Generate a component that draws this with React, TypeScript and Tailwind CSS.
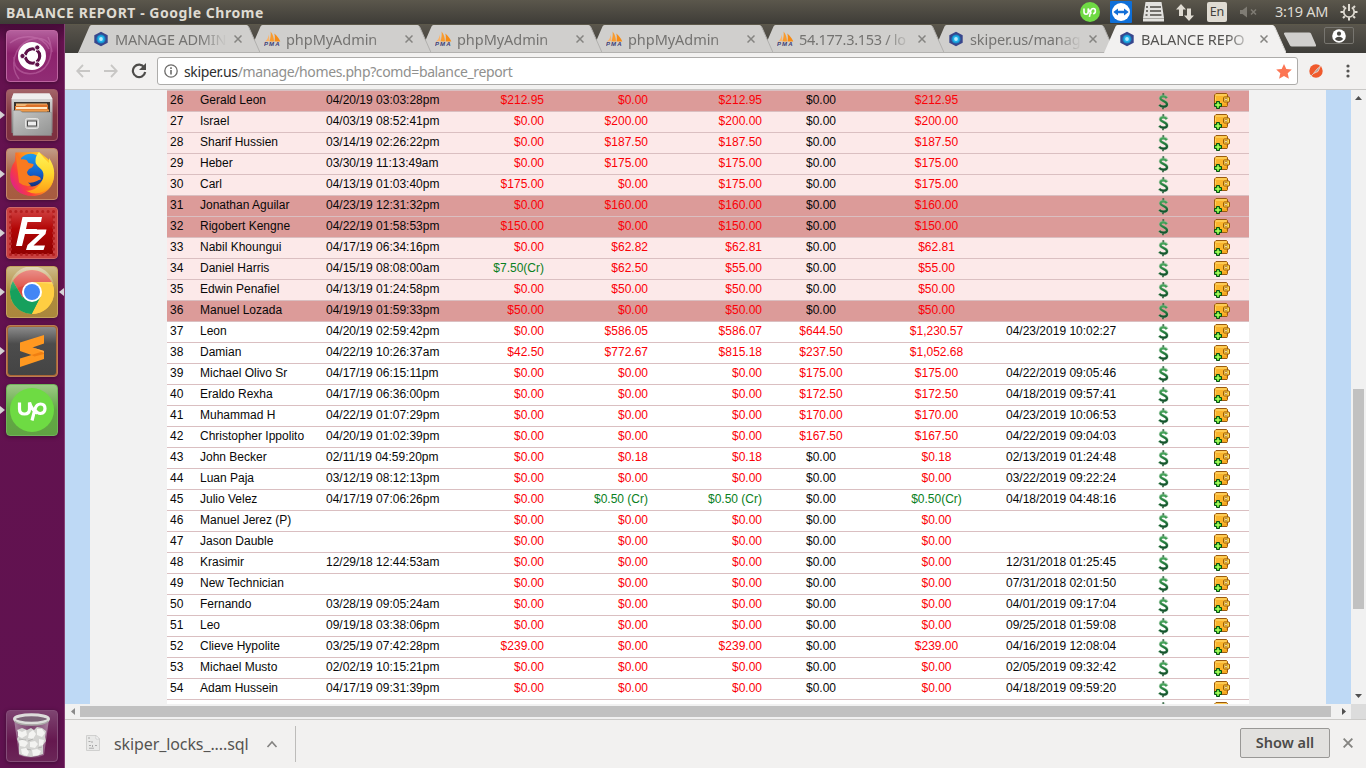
import React from 'react';

type Row = [number, string, string, string, string, string, string, string, string];

const rows: Row[] = [
  [26, 'Gerald Leon', '04/20/19 03:03:28pm', '$212.95', '$0.00', '$212.95', '$0.00', '$212.95', ''],
  [27, 'Israel', '04/03/19 08:52:41pm', '$0.00', '$200.00', '$200.00', '$0.00', '$200.00', ''],
  [28, 'Sharif Hussien', '03/14/19 02:26:22pm', '$0.00', '$187.50', '$187.50', '$0.00', '$187.50', ''],
  [29, 'Heber', '03/30/19 11:13:49am', '$0.00', '$175.00', '$175.00', '$0.00', '$175.00', ''],
  [30, 'Carl', '04/13/19 01:03:40pm', '$175.00', '$0.00', '$175.00', '$0.00', '$175.00', ''],
  [31, 'Jonathan Aguilar', '04/23/19 12:31:32pm', '$0.00', '$160.00', '$160.00', '$0.00', '$160.00', ''],
  [32, 'Rigobert Kengne', '04/22/19 01:58:53pm', '$150.00', '$0.00', '$150.00', '$0.00', '$150.00', ''],
  [33, 'Nabil Khoungui', '04/17/19 06:34:16pm', '$0.00', '$62.82', '$62.81', '$0.00', '$62.81', ''],
  [34, 'Daniel Harris', '04/15/19 08:08:00am', '$7.50(Cr)', '$62.50', '$55.00', '$0.00', '$55.00', ''],
  [35, 'Edwin Penafiel', '04/13/19 01:24:58pm', '$0.00', '$50.00', '$50.00', '$0.00', '$50.00', ''],
  [36, 'Manuel Lozada', '04/19/19 01:59:33pm', '$50.00', '$0.00', '$50.00', '$0.00', '$50.00', ''],
  [37, 'Leon', '04/20/19 02:59:42pm', '$0.00', '$586.05', '$586.07', '$644.50', '$1,230.57', '04/23/2019 10:02:27'],
  [38, 'Damian', '04/22/19 10:26:37am', '$42.50', '$772.67', '$815.18', '$237.50', '$1,052.68', ''],
  [39, 'Michael Olivo Sr', '04/17/19 06:15:11pm', '$0.00', '$0.00', '$0.00', '$175.00', '$175.00', '04/22/2019 09:05:46'],
  [40, 'Eraldo Rexha', '04/17/19 06:36:00pm', '$0.00', '$0.00', '$0.00', '$172.50', '$172.50', '04/18/2019 09:57:41'],
  [41, 'Muhammad H', '04/22/19 01:07:29pm', '$0.00', '$0.00', '$0.00', '$170.00', '$170.00', '04/23/2019 10:06:53'],
  [42, 'Christopher Ippolito', '04/20/19 01:02:39pm', '$0.00', '$0.00', '$0.00', '$167.50', '$167.50', '04/22/2019 09:04:03'],
  [43, 'John Becker', '02/11/19 04:59:20pm', '$0.00', '$0.18', '$0.18', '$0.00', '$0.18', '02/13/2019 01:24:48'],
  [44, 'Luan Paja', '03/12/19 08:12:13pm', '$0.00', '$0.00', '$0.00', '$0.00', '$0.00', '03/22/2019 09:22:24'],
  [45, 'Julio Velez', '04/17/19 07:06:26pm', '$0.00', '$0.50 (Cr)', '$0.50 (Cr)', '$0.00', '$0.50(Cr)', '04/18/2019 04:48:16'],
  [46, 'Manuel Jerez (P)', '', '$0.00', '$0.00', '$0.00', '$0.00', '$0.00', ''],
  [47, 'Jason Dauble', '', '$0.00', '$0.00', '$0.00', '$0.00', '$0.00', ''],
  [48, 'Krasimir', '12/29/18 12:44:53am', '$0.00', '$0.00', '$0.00', '$0.00', '$0.00', '12/31/2018 01:25:45'],
  [49, 'New Technician', '', '$0.00', '$0.00', '$0.00', '$0.00', '$0.00', '07/31/2018 02:01:50'],
  [50, 'Fernando', '03/28/19 09:05:24am', '$0.00', '$0.00', '$0.00', '$0.00', '$0.00', '04/01/2019 09:17:04'],
  [51, 'Leo', '09/19/18 03:38:06pm', '$0.00', '$0.00', '$0.00', '$0.00', '$0.00', '09/25/2018 01:59:08'],
  [52, 'Clieve Hypolite', '03/25/19 07:42:28pm', '$239.00', '$0.00', '$239.00', '$0.00', '$239.00', '04/16/2019 12:08:04'],
  [53, 'Michael Musto', '02/02/19 10:15:21pm', '$0.00', '$0.00', '$0.00', '$0.00', '$0.00', '02/05/2019 09:32:42'],
  [54, 'Adam Hussein', '04/17/19 09:31:39pm', '$0.00', '$0.00', '$0.00', '$0.00', '$0.00', '04/18/2019 09:59:20'],
];

const darkRows = [26, 31, 32, 36];

function rowTone(n: number) {
  if (darkRows.includes(n)) return 'bg-[#dc9b99]';
  return n < 37 ? 'bg-[#fce9e9]' : 'bg-white';
}

function amountTone(v: string) {
  return v.includes('Cr') ? 'text-[#098022]' : 'text-[#fb0007]';
}

function DollarIcon() {
  return (
    <svg width="12" height="17" viewBox="0 0 12 17" fill="none">
      <path d="M6.300 .3V3M6 14V16.300" stroke="#2f5c3c" strokeWidth="1.800" />
      <path d="M10 5C9.200 2.400 3.300 2.200 3.300 5.200c0 2.900 6.800 2.600 6.800 6 0 3.400-6.300 3.200-7.900.5" stroke="#8fc29a" strokeOpacity=".6" strokeWidth="3" />
      <path d="M9.700 5.200C8.700 2.900 3.500 2.700 3.500 5.300c0 2.700 6.500 2.700 6.500 6 0 3.200-6.100 3-7.600.5" stroke="url(#dollar)" strokeWidth="2.200" />
      <defs>
        <linearGradient id="dollar" x1="0" y1="2" x2="0" y2="15" gradientUnits="userSpaceOnUse">
          <stop stopColor="#4fae62" />
          <stop offset=".5" stopColor="#247b3d" />
          <stop offset="1" stopColor="#12492a" />
        </linearGradient>
      </defs>
    </svg>
  );
}

function WalletIcon() {
  return (
    <svg width="16" height="16" viewBox="0 0 16 16" fill="none">
      <path d="M2 .5H12.500l1 1v2.500h1l1 1v3l-1 1h-1v3.500l-.5 1H1.500l-1-1V2z" fill="#fbb52c" stroke="#9a5a10" />
      <path d="M1.500 2H12.500" stroke="#ffe07a" />
      <path d="M1.500 3.500v4" stroke="#ffd35c" />
      <path d="M7 12H12.500V10" stroke="#f09c16" />
      <rect x="9.500" y="4" width="6" height="5" rx="1" fill="#ffdc55" stroke="#9a5a09" />
      <rect x="11" y="5.500" width="2" height="2" fill="#fff" stroke="#b87912" strokeWidth=".7" />
      <path d="M2.500 8.500h3v2h2v3h-2v2h-3v-2h-2v-3h2z" fill="#35d22a" stroke="#074d13" />
      <path d="M4 9.500v5M1.500 12h5" stroke="#d4ff6c" />
    </svg>
  );
}

function ReportRow({ row }: { row: Row }) {
  const [n, name, date, a, b, c, d, total, last] = row;
  return (
    <div className={`grid h-[21px] shrink-0 grid-cols-[33px_126px_118px_100px_104px_114px_118px_113px_149px_43px_64px] border-t border-[#dabfc1] text-[12px] leading-[19px] whitespace-nowrap text-[#080808] ${rowTone(n)}`}>
      <span className="pl-[3px]">{n}</span>
      <span>{name}</span>
      <span>{date}</span>
      <span className={`text-right ${amountTone(a)}`}>{a}</span>
      <span className={`text-right ${amountTone(b)}`}>{b}</span>
      <span className={`text-right ${amountTone(c)}`}>{c}</span>
      <span className={`text-center ${d === '$0.00' ? '' : 'text-[#fb0007]'}`}>{d}</span>
      <span className={`text-center ${amountTone(total)}`}>{total}</span>
      <span className="pl-[13px]">{last}</span>
      <span className="pt-[2px] pl-[15px]"><DollarIcon /></span>
      <span className="pt-[2px] pl-[29px]"><WalletIcon /></span>
    </div>
  );
}

function HexIcon() {
  return (
    <svg width="16" height="16" viewBox="0 0 16 16">
      <path d="M8 .8 14.700 4.300v7.400L8 15.200 1.300 11.700V4.300z" fill="#38468c" />
      <circle cx="8" cy="8" r="4.600" fill="#1884c4" />
      <circle cx="8" cy="8" r="3.400" fill="#1fb0e8" />
      <circle cx="8" cy="8" r="1.900" fill="#b5ecff" />
    </svg>
  );
}

function PmaIcon() {
  return (
    <svg width="17" height="16" viewBox="0 0 17 16">
      <path d="M1 10.500C3.500 8.500 4.500 6 4.800 3.500L5.500 10z" fill="#fbb469" />
      <path d="M5.500 10.500C6.500 7 7 4 6.600.5 9 3.500 10 7 10 10.500z" fill="#f99b2e" />
      <path d="M10.500 10.500C11 7.500 11 5 10.300 2.500 13 4.500 15 7.500 16.300 10.500z" fill="#f78b14" />
      <text x="0" y="15.200" fontFamily="Liberation Sans" fontSize="6" fontWeight="bold" fontStyle="italic" fill="#3c3d76" textLength="15.500">PMA</text>
    </svg>
  );
}

function Cross({ size = 8, color = '#858481' }: { size?: number; color?: string }) {
  return (
    <svg width={size} height={size} viewBox="0 0 8 8">
      <path d="M.5.5l7 7M7.500.5l-7 7" stroke={color} strokeWidth="1.500" />
    </svg>
  );
}

const tabs: { icon: 'hex' | 'pma'; label: string; z: string; track: string }[] = [
  { icon: 'hex', label: 'MANAGE ADMIN', z: 'z-[7]', track: 'tracking-[-0.2px]' },
  { icon: 'pma', label: 'phpMyAdmin', z: 'z-[6]', track: 'tracking-[-0.05px]' },
  { icon: 'pma', label: 'phpMyAdmin', z: 'z-[5]', track: 'tracking-[-0.05px]' },
  { icon: 'pma', label: 'phpMyAdmin', z: 'z-[4]', track: 'tracking-[-0.05px]' },
  { icon: 'pma', label: '54.177.3.153 / lo', z: 'z-[3]', track: 'tracking-[-0.3px]' },
  { icon: 'hex', label: 'skiper.us/manag', z: 'z-[2]', track: 'tracking-[-0.1px]' },
  { icon: 'hex', label: 'BALANCE REPO', z: 'z-[10]', track: 'tracking-[-0.1px]' },
];

function Tab({ index }: { index: number }) {
  const t = tabs[index];
  const active = index === 6;
  return (
    <div className={`relative -mr-[11px] flex h-[29px] w-[182px] shrink-0 items-center pl-[15px] ${t.z}`}>
      <svg className="absolute inset-0" width="182" height="29" viewBox="0 0 182 29">
        <path d="M0 29 11.500 2.500Q12 1 13.500 1H168.500Q170 1 170.500 2.500L182 29z" fill={active ? '#f2f1f0' : '#d0cfcd'} />
        <path d="M170.500 2.500 182 28.500" stroke={active ? '#dddcda' : '#b1b0ae'} fill="none" />
        {!active && <path d="M0 28.500H182" stroke="#b3b2b0" />}
      </svg>
      <span className="relative w-[22px]">{t.icon === 'hex' ? <HexIcon /> : <PmaIcon />}</span>
      <span className={`relative w-[115px] text-[14.500px] leading-[22px] whitespace-nowrap [mask-image:linear-gradient(to_right,#000_86px,transparent_112px)] ${t.track} ${active ? 'text-[#555452]' : 'text-[#747371]'}`}>
        {t.label}
      </span>
      <span className="relative ml-[4px]"><Cross /></span>
    </div>
  );
}

function Tray() {
  return (
    <div className="flex h-full items-center">
      <svg width="20" height="20" viewBox="0 0 20 20" className="mb-[1px]">
        <circle cx="10" cy="10" r="10" fill="#6fda44" />
        <path d="M4 6.500v3.300q0 2.400 2.100 2.400t2.100-2.400V6.500q1.200 3.500 3.300 5.200M9.400 14.800l1.300-6q.6-2.300 2.500-2.300 2.200 0 2.200 2.500t-2.300 2.700" fill="none" stroke="#fff" strokeWidth="1.600" />
      </svg>
      <svg width="22" height="22" viewBox="0 0 22 22" className="ml-[10px]">
        <rect width="22" height="22" rx="1" fill="#0e6fd8" />
        <circle cx="11" cy="11" r="9" fill="#fff" />
        <path d="M3.300 11 8 7.500v2.300h6V7.500l4.700 3.500-4.700 3.500v-2.300H8v2.300z" fill="#126fd7" />
      </svg>
      <svg width="21" height="20" viewBox="0 0 21 20" className="ml-[11px]">
        <path d="M2.500 0h16L21 16v3.500H0V16z" fill="#e3e2df" />
        <path d="M3 5h2M7 5h11M3 9h2M7 9h11M2.500 13h2M7 13h11.500" stroke="#4d4b46" strokeWidth="1.500" />
        <path d="M0 16.500h21" stroke="#aaa9a4" />
      </svg>
      <svg width="18" height="17" viewBox="0 0 18 17" className="ml-[12px]">
        <path d="M5 0 10 5.500H7V12H3V5.500H0zM13 17 8 11.500h3V4.500h4v7h3z" fill="#dfdbd2" />
      </svg>
      <span className="ml-[13px] flex h-5 w-5 items-center justify-center rounded-[2px] bg-[#dfdbd2] text-[12.500px] leading-none text-[#42413c]">En</span>
      <svg width="19" height="12" viewBox="0 0 19 12" className="ml-[12px]">
        <path d="M1 4h2.500L8 .5v11L3.500 8H1z" fill="#7f7c74" />
        <path d="m12 3.500 5 5M17 3.500l-5 5" stroke="#7f7c74" strokeWidth="1.500" />
      </svg>
      <span className="ml-[17px] w-[56px] text-[14.500px] tracking-[-0.25px] whitespace-nowrap text-[#dfdbd2]">3:19 AM</span>
      <svg width="18" height="18" viewBox="0 0 18 18" className="ml-[9px]" fill="none" stroke="#dfdbd2">
        <path d="M6.200 4.500a5.200 5.200 0 1 0 5.600 0" strokeWidth="1.700" />
        <path d="M9 1v7" strokeWidth="2" />
        <path d="M.5 9h3M14.500 9h3M3 3l1.700 1.700M15 3l-1.700 1.700M3 15l1.800-1.800M15 15l-1.800-1.800M9 14.500v3" strokeWidth="2" />
      </svg>
    </div>
  );
}

function Tile({ tone, children, pip, active }: { tone: string; children: React.ReactNode; pip?: boolean; active?: boolean }) {
  return (
    <div className="flex h-[52px] w-[64px] shrink-0 items-center">
      <span className="flex w-[6px] items-center">
        {pip && <svg width="5" height="8" viewBox="0 0 5 8"><path d="M0 0 5 4 0 8z" fill="#d6d3d5" /></svg>}
      </span>
      <span className={`flex h-[52px] w-[52px] items-center justify-center overflow-hidden rounded-[4px] border shadow-[0_1px_4px_rgba(0,0,0,0.35)] ${tone}`}>{children}</span>
      <span className="flex w-[6px] justify-end">
        {active && <svg width="5" height="8" viewBox="0 0 5 8"><path d="M5 0 0 4l5 4z" fill="#d6d3d5" /></svg>}
      </span>
    </div>
  );
}

function UbuntuLogo() {
  return (
    <svg width="50" height="50" viewBox="0 0 50 50" fill="none">
      <path d="M12 48C2 35 7 16 22 9c12-5 22 1 23 12M41 6c7 14 2 32-12 36C16 45 6 38 7 26M3 12C16 2 36 4 42 18" stroke="#d486bd" strokeOpacity=".4" strokeWidth="1.500" />
      <circle cx="25" cy="25" r="14" fill="#fff" />
      <circle cx="25.500" cy="25" r="7.200" stroke="#5e1149" strokeWidth="3.200" />
      <path d="M25.500 25H13M25.500 25l6-11M25.500 25l6 11" stroke="#fff" strokeWidth="1.400" />
      <circle cx="25.500" cy="25" r="5.400" fill="#fff" />
      <g fill="#5e1149" stroke="#fff" strokeWidth=".9">
        <circle cx="15.500" cy="25" r="2.600" />
        <circle cx="30.300" cy="16.500" r="2.600" />
        <circle cx="30.300" cy="33.500" r="2.600" />
      </g>
    </svg>
  );
}

function FilesLogo() {
  return (
    <svg width="50" height="50" viewBox="0 0 50 50">
      <defs>
        <linearGradient id="cab" x1="0" y1="0" x2="0" y2="1"><stop stopColor="#e2e2e1" /><stop offset="1" stopColor="#7b7c7b" /></linearGradient>
        <linearGradient id="drawer" x1="0" y1="0" x2="1" y2="1"><stop stopColor="#c6c7c6" /><stop offset="1" stopColor="#929392" /></linearGradient>
      </defs>
      <path d="M6.500 3.500h36L45.500 9v34h-41V9z" fill="url(#cab)" />
      <path d="M6.500 3.500h36L45.500 9h-41z" fill="#efefee" />
      <path d="M7 12h36v10H7z" fill="#39332f" />
      <path d="M9 13.500h31v8H9z" fill="#f0b776" />
      <path d="M8 16h10l2-1.500h21V20H8z" fill="#dc7128" />
      <path d="M9 17h31v2H9z" fill="#ffe9c8" />
      <path d="M8 19.500h34v2H8z" fill="#ec9a4d" />
      <path d="M6 20.500h7l2.500 2H44.500v23H6z" fill="url(#drawer)" stroke="#888" strokeWidth=".5" />
      <rect x="18.500" y="28.500" width="13" height="10" rx="2" fill="#c6c6c5" stroke="#e5e5e4" />
      <rect x="20.500" y="31" width="9" height="5" fill="#eee" stroke="#4a4a4a" />
    </svg>
  );
}

function FirefoxLogo() {
  return (
    <svg width="50" height="50" viewBox="0 0 50 50">
      <defs>
        <linearGradient id="fire" x1="42" y1="14" x2="6" y2="36" gradientUnits="userSpaceOnUse"><stop stopColor="#ffc928" /><stop offset=".45" stopColor="#ff8a1c" /><stop offset=".75" stopColor="#fb3f3a" /><stop offset="1" stopColor="#e32480" /></linearGradient>
        <linearGradient id="globe" x1="0" y1="0" x2="0" y2="1"><stop stopColor="#1d9df0" /><stop offset=".6" stopColor="#145fc8" /><stop offset="1" stopColor="#14307c" /></linearGradient>
        <linearGradient id="tail" x1="0" y1="0" x2="0" y2="1"><stop stopColor="#fff25a" /><stop offset=".5" stopColor="#ffd92e" /><stop offset="1" stopColor="#ff9d16" /></linearGradient>
      </defs>
      <path d="M8.500 3.500 8 12Q3 19 3.200 28C4 39 13 47 25.500 47 38 47 47 38 47 26q0-10-6-16L32 3z" fill="url(#fire)" />
      <path d="M14 9C18 5 24 3.500 29 6q5 3 7.500 10 2 9-1 15Q30 39 22 37q-6-2-8-7z" fill="url(#globe)" />
      <path d="M8.500 3.500Q10 7.500 13 10.500q3.500-.8 6.500.5 2 2.500 2 3l5 1Q27 18 22 20l-2 3q.3 3.500 3.500 4 4-1 8 .5 2 .5 2.500 3-2.500.3-4 1.500-5 2.500-9 1.500l3 3q-6 2-12-3Z" fill="#f97a1f" />
      <path d="M32 3Q28 7.500 28.500 13c.5 4 5 5.500 7 9 3 6-1 14-8 18q-5 2.500-9 1.500 9 5 17 1.500C43 40 47.500 33 47.200 24 47 17 44.500 13 42 9v5Q37 9.500 32 3z" fill="url(#tail)" />
    </svg>
  );
}

function FilezillaLogo() {
  return (
    <svg width="50" height="50" viewBox="0 0 50 50">
      <defs><linearGradient id="fz" x1="0" y1="0" x2="0" y2="1"><stop stopColor="#cc3a3a" /><stop offset=".4" stopColor="#b30606" /><stop offset="1" stopColor="#900000" /></linearGradient></defs>
      <rect width="50" height="50" fill="#c94040" />
      <rect x="4" y="4" width="42" height="42" fill="url(#fz)" />
      <rect x="3.500" y="3.500" width="43" height="43" fill="none" stroke="#b32020" strokeWidth="3.200" strokeLinecap="round" strokeDasharray="0 5.375" />
      <path d="M15.500 9H35l-1 5H20.500L19 21h11l-1 5H18l-3 12H9z" fill="#fff" />
      <path d="M22.500 21.500h17L38.500 26 26.500 37.500H38L36.500 42H19l1.500-5L32.500 26H21.500z" fill="#fff" />
    </svg>
  );
}

function ChromeLogo() {
  return (
    <svg width="50" height="50" viewBox="0 0 50 50">
      <defs><linearGradient id="sheen" x1="0" y1="0" x2="0" y2="1"><stop stopColor="#fff" stopOpacity=".45" /><stop offset="1" stopColor="#fff" stopOpacity="0" /></linearGradient></defs>
      <circle cx="25" cy="25" r="22" fill="#ffce42" />
      <path d="M25 25 15.500 30.500 5.950 14A22 22 0 0 1 44.050 14L44.700 15H25z" fill="#dc483d" />
      <path d="M5.950 14A22 22 0 0 0 25 47l8.660-17L25 25l-9.500 5.500z" fill="#16a05d" />
      <path d="M25 15h19.700A22 22 0 0 1 25 47l8.660-17z" fill="#ffce42" />
      <circle cx="25" cy="25" r="10" fill="#fff" />
      <circle cx="25" cy="25" r="8" fill="#4286f5" />
      <path d="M3 25A22 22 0 0 1 47 18Q25 12 3 25z" fill="url(#sheen)" />
    </svg>
  );
}

function SublimeLogo() {
  return (
    <svg width="50" height="50" viewBox="0 0 50 50">
      <defs><linearGradient id="subl" x1="0" y1="0" x2="0" y2="1"><stop stopColor="#8b8b8b" /><stop offset=".35" stopColor="#4c4c4c" /><stop offset="1" stopColor="#444" /></linearGradient></defs>
      <rect x="1" y="1" width="48" height="48" rx="3" fill="url(#subl)" />
      <path d="M13 16.500 37 9v8.500L25.500 21.500 37 25v8L13 41v-8.500L24.500 29 13 25z" fill="#ff9820" />
      <path d="M24.500 29 37 25v3l-9.500 2.500z" fill="#f07f12" />
      <path d="M25.500 21.500 37 25v2z" fill="#ffa63c" />
    </svg>
  );
}

function UpworkLogo() {
  return (
    <svg width="50" height="50" viewBox="0 0 50 50" fill="none">
      <circle cx="25" cy="25" r="22" fill="#6edb43" />
      <path d="M12.500 17.500v6.500q0 5 5 5t5-5v-6.500q2 7.500 8 10.500M25 35.500l3-11.500q1.500-5 5.500-5 4.500 0 4.500 4.500T33.500 28.500q-3.500 0-6.500-5" stroke="#fff" strokeWidth="3.200" />
    </svg>
  );
}

function TrashLogo() {
  return (
    <svg width="50" height="50" viewBox="0 0 50 50">
      <defs><linearGradient id="can" x1="0" y1="0" x2="1" y2="0"><stop stopColor="#dad0da" stopOpacity=".5" /><stop offset=".5" stopColor="#8e6b88" stopOpacity=".35" /><stop offset="1" stopColor="#e6dbe4" stopOpacity=".5" /></linearGradient></defs>
      <path d="M7 8 12 44q13 6 25 0L42 8z" fill="url(#can)" />
      <path d="m10 19 5-2 5 2 4-2 3 2 3-3 5 1 4 3-1 6 1 4-3 4v9l-6 2-6 1-7-1-5-2v-10l-2-5 2-4z" fill="#d3d3d1" />
      <path d="m11 19 4 2 4-2 1 5-5 3-4-2zM22 22l4-3 3 4-3 5-5-1zM30 18l5 0 3 4-3 4-5-2zM12 30l5-2 4 4-3 4-5-1zM23 31l5-1 3 3-3 4-5-1zM32 28l5 1-1 5-4 1zM14 38l5-1 3 4-2 4-5-2zM25 39l5-1 4 2-2 4-6 1z" fill="#f3f3f1" />
      <path d="m12 28 7 1M21 30l5-2M20 38l4 1M31 37l4-1" stroke="#b3b3b1" fill="none" />
      <ellipse cx="24.500" cy="8" rx="17" ry="4.200" fill="#7b6477" stroke="#dddddb" strokeWidth="3" />
      <path d="M7.500 10q4 4 17 4t17-4" stroke="#aaaaa7" strokeWidth="1.300" fill="none" />
    </svg>
  );
}

function Launcher() {
  return (
    <div className="flex w-[65px] shrink-0 flex-col border-r border-[#854074] bg-[linear-gradient(#470b39,#65124f_18px,#601250)] pt-[6px] pb-[6px]">
      <div className="flex flex-1 flex-col gap-[7px]">
        <Tile tone="border-[#bd65a1] bg-[linear-gradient(#b4609d,#8d226d_45%,#902c74)]"><UbuntuLogo /></Tile>
        <Tile pip tone="border-[#a45b68] bg-[linear-gradient(#a36568,#813340_50%,#7c3040)]"><FilesLogo /></Tile>
        <Tile pip tone="border-[#c48869] bg-[linear-gradient(#c29c87,#a95f43_50%,#a75b40)]"><FirefoxLogo /></Tile>
        <Tile pip tone="border-[#d16867] bg-[#c84747]"><FilezillaLogo /></Tile>
        <Tile pip active tone="border-[#c5a35c] bg-[linear-gradient(#cdbb89,#af8b3c_50%,#aa873d)]"><ChromeLogo /></Tile>
        <Tile pip tone="border-[#bb7f54] bg-[#a96636]"><SublimeLogo /></Tile>
        <Tile pip tone="border-[#70b45a] bg-[linear-gradient(#9dc986,#62a944_50%,#60a343)]"><UpworkLogo /></Tile>
      </div>
      <Tile tone="border-[#844d78] bg-[linear-gradient(#7e4471,#65184f_60%,#6b2658)]"><TrashLogo /></Tile>
    </div>
  );
}

function Toolbar() {
  return (
    <div className="flex h-[37px] items-center border-b border-[#c9c8c6] bg-[#f2f1f0] pl-[11px]">
      <svg width="14" height="14" viewBox="0 0 14 14" fill="none" stroke="#c8c7c5" strokeWidth="1.800"><path d="M14 7H1.500M7 1 1.200 7 7 13" /></svg>
      <svg width="14" height="14" viewBox="0 0 14 14" fill="none" stroke="#c8c7c5" strokeWidth="1.800" className="ml-[14px]"><path d="M0 7h12.500M7 1l5.800 6L7 13" /></svg>
      <svg width="16" height="16" viewBox="0 0 16 16" className="ml-[13px]"><path d="M13.300 4.500A6.200 6.200 0 1 0 14.200 9" fill="none" stroke="#4d4c4a" strokeWidth="2.200" /><path d="M15 0v7H8z" fill="#4d4c4a" /></svg>
      <div className="ml-[10px] flex h-[28px] w-[1141px] items-center rounded-[3px] border border-[#adacaa] bg-white pl-[6px]">
        <svg width="14" height="14" viewBox="0 0 14 14" fill="none" stroke="#6c6b69"><circle cx="7" cy="7" r="6.200" strokeWidth="1.300" /><path d="M7 6v4.500M7 3.200v1.700" strokeWidth="1.600" /></svg>
        <span className="ml-[6px] flex-1 text-[14px] tracking-[-0.37px] whitespace-nowrap text-[#90908e]"><span className="text-[#2e2e2e]">skiper.us</span>/manage/homes.php?comd=balance_report</span>
        <svg width="16" height="15" viewBox="0 0 16 15" className="mr-[5px]"><path d="m8 0 2.300 5 5.500.6-4.100 3.700 1.200 5.400L8 12l-4.900 2.700 1.200-5.400L.2 5.600 5.700 5z" fill="#fc7553" /></svg>
      </div>
      <svg width="14" height="14" viewBox="0 0 14 14" className="ml-[11px]">
        <circle cx="7" cy="7" r="6.700" fill="#f05a2c" />
        <path d="m4.500 9.500 3-4 4-3.500-2.500 5.500z" fill="#b9a39b" stroke="#f6e2d8" strokeWidth=".7" />
        <path d="m1.500 12.500 4-4" stroke="#d6c3ba" />
      </svg>
      <svg width="4" height="14" viewBox="0 0 4 14" className="ml-[23px]" fill="#555452"><circle cx="2" cy="2" r="1.600" /><circle cx="2" cy="7" r="1.600" /><circle cx="2" cy="12" r="1.600" /></svg>
    </div>
  );
}

function Downloads() {
  return (
    <div className="flex h-[49px] items-center border-t border-[#cbcac8] bg-[#f2f1f0] pl-[21px]">
      <svg width="14" height="16" viewBox="0 0 14 16" className="mb-[2px]">
        <path d="M.5.500H10L13.500 4v11.500H.5z" fill="#e9e9e8" stroke="#d0d0cf" />
        <path d="M10 .5V4h3.500z" fill="#fff" stroke="#c6c6c5" strokeWidth=".7" />
        <path d="M3 2v2M2.500 6.500h2M6 6v2M3 10.500h2M6.500 10v2M9 10.500h2M3 13.200h5" stroke="#aaa" />
      </svg>
      <span className="ml-[14px] w-[134px] text-[16px] tracking-[-0.1px] whitespace-nowrap text-[#555452]">skiper_locks_....sql</span>
      <svg width="12" height="8" viewBox="0 0 12 8" className="ml-[18px]"><path d="M1.500 7 6 2 10.500 7" fill="none" stroke="#838280" strokeWidth="1.600" /></svg>
      <span className="ml-[17px] h-[36px] w-px bg-[#bdbcba]" />
      <span className="flex-1" />
      <button className="mt-[-2px] h-[30px] w-[90px] rounded-[2px] border border-[#999896] bg-[#e2e1df] text-[14.500px] font-semibold text-[#4c4b49]">Show all</button>
      <span className="mr-[13px] ml-[13px] pb-[2px]"><Cross size={10} /></span>
    </div>
  );
}

export default function App() {
  return (
    <div className="flex h-[768px] w-[1366px] flex-col overflow-hidden font-['Noto_Sans',sans-serif]">
      <header className="flex h-[24px] shrink-0 items-center justify-between bg-[linear-gradient(#5b574c,#3e3c37)] pr-[8px] pl-[6px]">
        <h1 className="text-[14px] font-bold tracking-[0.54px] whitespace-nowrap text-[#dfdbd2]">BALANCE REPORT - Google Chrome</h1>
        <Tray />
      </header>
      <div className="flex min-h-0 flex-1">
        <Launcher />
        <main className="flex min-w-0 flex-1 flex-col">
          <div className="isolate flex h-[29px] shrink-0 border-t border-[#5c584a] bg-[linear-gradient(#59554c,#3e3d39)] pl-[13px]">
            <div className="-mt-px flex">
              {tabs.map((_, i) => <Tab key={i} index={i} />)}
            </div>
            <svg width="34" height="16" viewBox="0 0 34 16" className="mt-[7px] ml-[8px]"><path d="M2 .5h24q1.500 0 2 1L33 13q.5 1.500-1 1.500H9q-1.500 0-2-1L1 2Q.500.500 2 .5z" fill="#d0cfcd" /></svg>
            <span className="mt-[2px] ml-[7px] flex h-[17px] w-[30px] items-center justify-center rounded-[2px] border border-[#77756f]">
              <svg width="14" height="14" viewBox="0 0 14 14"><circle cx="7" cy="7" r="6.800" fill="#fff" /><circle cx="7" cy="4.700" r="2.100" fill="#474641" /><path d="M2.800 10q1.700-2.300 4.200-2.300T11.200 10Q9.500 12 7 12t-4.200-2z" fill="#474641" /></svg>
            </span>
          </div>
          <Toolbar />
          <div className="flex h-[614px] shrink-0 font-['Liberation_Sans',sans-serif]">
            <div className="flex flex-1 justify-start overflow-hidden border-x-[25px] border-[#bed9f5] bg-[#f2f2f2] pl-[77px]">
              <div className="flex h-[614px] w-[1082px] flex-col overflow-hidden">
                {rows.map((r) => <ReportRow key={r[0]} row={r} />)}
                <div className="grid h-[21px] shrink-0 grid-cols-[975px_43px_64px] border-t border-[#dabfc1] bg-white">
                  <span />
                  <span className="pt-[2px] pl-[15px]"><DollarIcon /></span>
                  <span className="pt-[2px] pl-[29px]"><WalletIcon /></span>
                </div>
              </div>
            </div>
            <div className="flex w-[15px] flex-col items-center bg-[#f1f1f1] pt-[6px] pb-[6px]">
              <svg width="7" height="4" viewBox="0 0 7 4"><path d="M0 4 3.500 0 7 4z" fill="#505050" /></svg>
              <span className="mt-[289px] h-[220px] w-[11px] bg-[#c1c1c1]" />
              <span className="flex-1" />
              <svg width="7" height="4" viewBox="0 0 7 4"><path d="M0 0h7L3.500 4z" fill="#505050" /></svg>
            </div>
          </div>
          <div className="flex h-[15px] shrink-0 items-center bg-[#f1f1f1]">
            <span className="flex w-[15px] justify-center"><svg width="4" height="7" viewBox="0 0 4 7"><path d="M4 0v7L0 3.500z" fill="#8a8a8a" /></svg></span>
            <span className="h-[11px] w-[1251px] bg-[#c1c1c1]" />
            <span className="flex w-[20px] justify-end pr-[5px]"><svg width="4" height="7" viewBox="0 0 4 7"><path d="M0 0v7l4-3.500z" fill="#505050" /></svg></span>
            <span className="h-[15px] w-[15px] bg-[#dcdcdc]" />
          </div>
          <Downloads />
        </main>
      </div>
    </div>
  );
}
